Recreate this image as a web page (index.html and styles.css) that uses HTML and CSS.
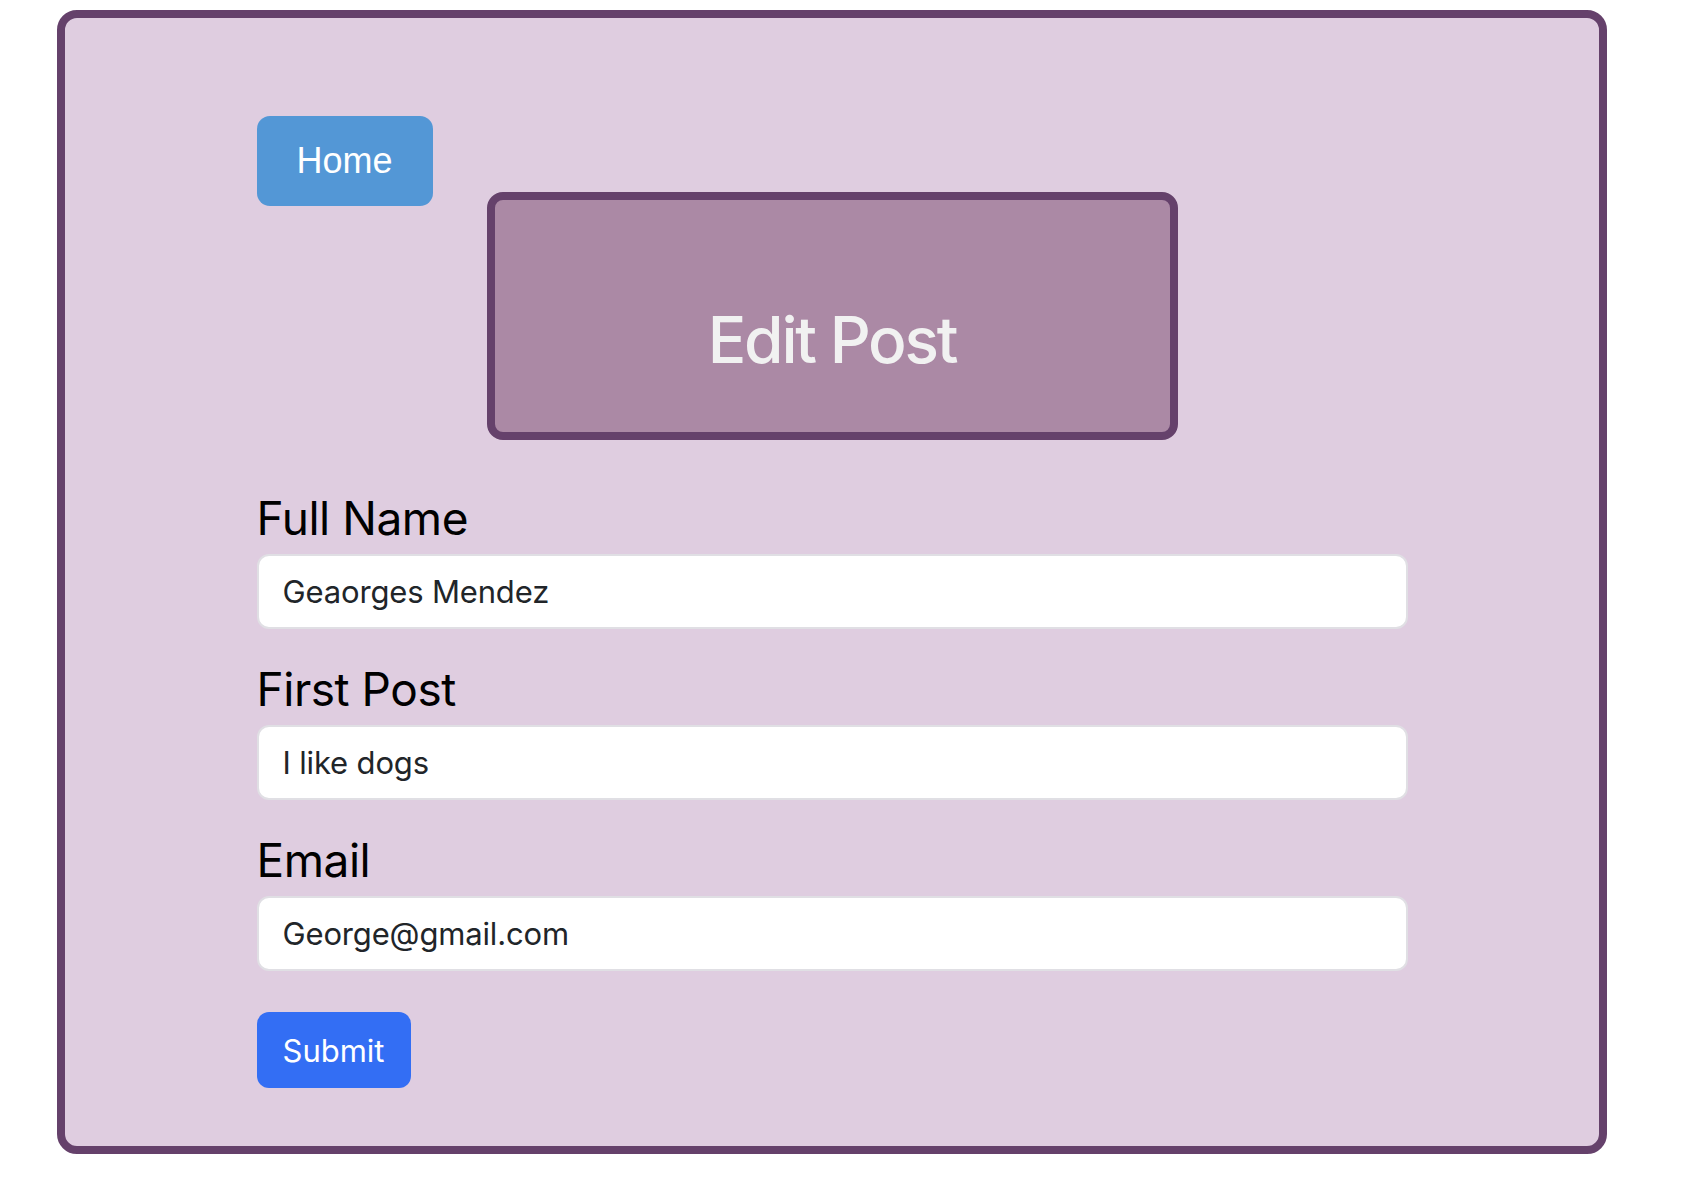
FILE: index.html
```html
<!DOCTYPE html>
<html lang="en">
<head>
<meta charset="utf-8">
<title>Edit Post</title>
<link rel="stylesheet" href="styles.css">
</head>
<body>
  <div class="card">
    <div class="inner">
      <div class="top-row">
        <a class="home-btn" href="#">Home</a>
      </div>
      <div class="title-box">
        <h1 class="title">Edit Post</h1>
      </div>
      <form class="form">
        <div class="field">
          <label class="label" for="name">Full Name</label>
          <input class="input" id="name" type="text" value="Geaorges Mendez">
        </div>
        <div class="field">
          <label class="label" for="post">First Post</label>
          <input class="input" id="post" type="text" value="I like dogs">
        </div>
        <div class="field">
          <label class="label" for="email">Email</label>
          <input class="input" id="email" type="text" value="George@gmail.com">
        </div>
        <div class="actions">
          <button class="submit-btn" type="button">Submit</button>
        </div>
      </form>
    </div>
  </div>
</body>
</html>
```
FILE: styles.css
```css
* { box-sizing: border-box; }

body {
  margin: 0;
  background: #ffffff;
  font-family: Inter, "Noto Sans", sans-serif;
}

.card {
  width: 1550px;
  margin: 10px 0 0 57px;
  border: 8px solid #65416b;
  border-radius: 20px;
  background: #dfcde0;
  padding: 98px 0 58px;
}

.inner {
  width: 1151px;
  margin: 0 auto;
  display: flex;
  flex-direction: column;
}

.top-row {
  display: flex;
}

.home-btn {
  display: block;
  height: 90px;
  padding: 0 40px;
  line-height: 90px;
  font-family: "Liberation Sans", Arial, sans-serif;
  font-size: 36px;
  color: #ffffff;
  text-decoration: none;
  background: #5397d6;
  border-radius: 13px;
}

.title-box {
  width: 691px;
  height: 248px;
  margin: -14px auto 0;
  border: 8px solid #65416b;
  border-radius: 16px;
  background: #ab89a5;
  padding-top: 108px;
  text-align: center;
}

.title {
  margin: 0;
  font-size: 64px;
  line-height: 64px;
  font-weight: 500;
  letter-spacing: -0.035em;
  color: #f1f1f1;
}

.form {
  display: flex;
  flex-direction: column;
  margin-top: 49px;
}

.field {
  display: flex;
  flex-direction: column;
  margin-bottom: 31px;
}

.label {
  font-size: 46px;
  line-height: 58px;
  letter-spacing: -0.01em;
  color: #000000;
  margin-bottom: 7px;
}

.input {
  width: 100%;
  height: 75px;
  padding: 0 24px;
  border: 2px solid #e0dfe4;
  border-radius: 12px;
  background: #ffffff;
  font-family: Inter, "Noto Sans", sans-serif;
  font-size: 31px;
  letter-spacing: -0.005em;
  color: #212529;
  outline: none;
}

.actions {
  margin-top: 10px;
  display: flex;
}

.submit-btn {
  height: 76px;
  padding: 0 26px;
  border: none;
  border-radius: 12px;
  background: #336ef4;
  color: #ffffff;
  font-family: Inter, "Noto Sans", sans-serif;
  font-size: 31px;
}
```
